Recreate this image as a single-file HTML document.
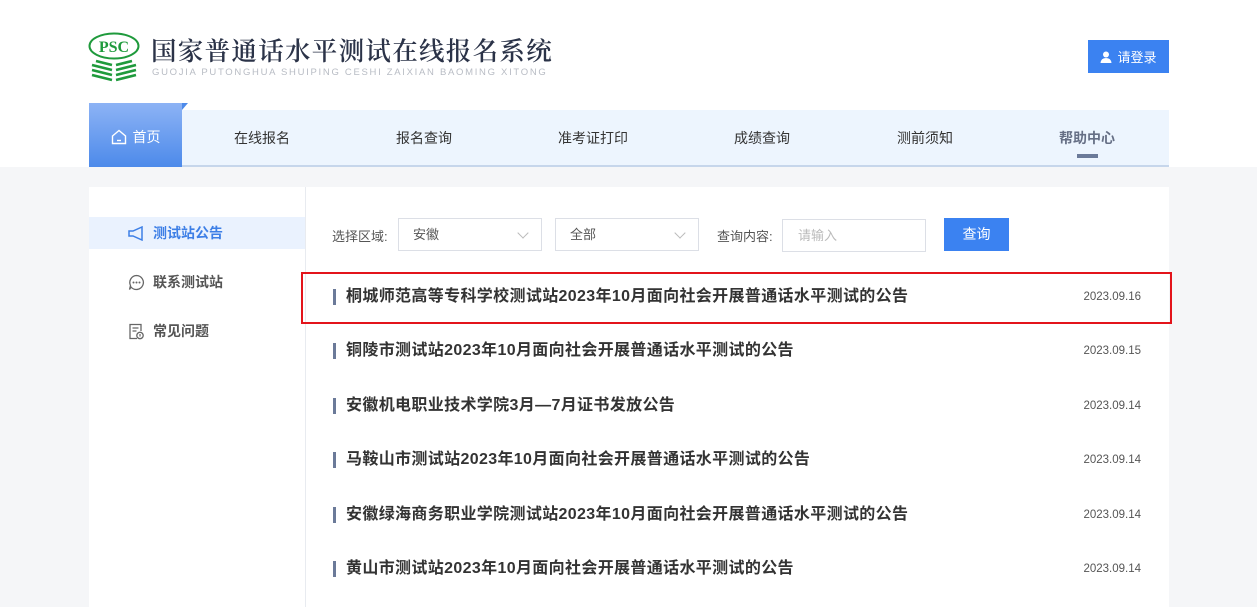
<!DOCTYPE html>
<html><head><meta charset="utf-8"><style>
*{margin:0;padding:0;box-sizing:border-box}
body{width:1257px;height:595px;overflow:hidden;background:#f5f6f8;font-family:"Liberation Sans","Noto Sans CJK SC",sans-serif;position:relative}
.hdr{position:absolute;left:0;top:0;width:1257px;height:167px;background:#fff}
.abs{position:absolute}
.title{left:151px;top:34px;font-size:25.5px;line-height:32px;color:#2b3348;letter-spacing:1.3px;font-family:"Noto Serif CJK SC","Noto Sans CJK SC",serif;font-weight:600;white-space:nowrap}
.sub{left:152px;top:67px;font-size:9.5px;color:#b8bcc4;letter-spacing:1.7px;white-space:nowrap}
.login{left:1088px;top:40px;width:81px;height:33px;background:#3b82f1;color:#fff;font-size:13px;display:flex;align-items:center;justify-content:center;gap:5px}
.nav{left:89px;top:110px;width:1080px;height:57px;background:#edf5fe;border-bottom:2px solid #c6d6eb}
.home{left:89px;top:103px;width:93px;height:64px;padding-top:4px;background:linear-gradient(#8db3f5,#4d8aea);color:#fff;font-size:14px;display:flex;align-items:center;justify-content:center;gap:6px}
.ni{top:128px;font-size:14px;color:#333;white-space:nowrap}
.card{left:89px;top:187px;width:1080px;height:420px;background:#fff}
.side{left:305px;top:187px;width:1px;height:420px;background:#e8ebf0}
.si{left:89px;width:216px;height:32px;display:flex;align-items:center;padding-left:39px;gap:8px;font-size:14px;font-weight:bold;color:#555}
.lbl{font-size:13px;color:#555;top:226px}
.sel{top:218px;height:33px;border:1px solid #dcdfe6;font-size:13px;color:#555;padding-left:14px;line-height:31px}
.sel:after{content:"";position:absolute;right:14px;top:10px;width:7px;height:7px;border-right:1px solid #bbb;border-bottom:1px solid #bbb;transform:rotate(45deg)}
.row{left:333px;width:808px;height:20px;display:flex;justify-content:space-between;align-items:center}
.row b{font-size:16px;letter-spacing:0.35px;color:#333;border-left:3px solid #6b7a99;padding-left:10px;line-height:16px}
.row span{font-size:11.5px;color:#555}
</style></head><body>
<div class="hdr"></div>
<svg class="abs" style="left:88px;top:32px" width="52" height="50" viewBox="0 0 52 50">
<ellipse cx="26" cy="14" rx="24.5" ry="12.5" fill="none" stroke="#1f9a3c" stroke-width="2"/>
<text x="26" y="20" text-anchor="middle" font-family="Liberation Serif" font-weight="bold" font-size="16" fill="#1f9a3c">PSC</text>
<g fill="none" stroke="#1f9a3c" stroke-width="2.6">
<path d="M4 33 L24 38 M28 38 L48 33"/><path d="M4 38 L24 43 M28 43 L48 38"/><path d="M4 43 L24 48 M28 48 L48 43"/><path d="M8 29 L24 33 M28 33 L44 29"/></g></svg>
<div class="abs title">国家普通话水平测试在线报名系统</div>
<div class="abs sub">GUOJIA PUTONGHUA SHUIPING CESHI ZAIXIAN BAOMING XITONG</div>
<div class="abs login"><svg width="12" height="12" viewBox="0 0 12 12"><circle cx="6" cy="3.5" r="3" fill="#fff"/><path d="M0.5 12 Q1 7 6 7 Q11 7 11.5 12Z" fill="#fff"/></svg>请登录</div>
<div class="abs nav"></div>
<div class="abs" style="left:182px;top:103px;width:0;height:0;border-left:6px solid #4d8aea;border-bottom:7px solid transparent"></div>
<div class="abs home"><svg width="16" height="16" viewBox="0 0 16 16"><path d="M1.5 7 L8 1.5 L14.5 7 V14.5 H1.5Z" fill="none" stroke="#fff" stroke-width="1.4"/><path d="M6 11.5 H10" stroke="#fff" stroke-width="1.4"/></svg>首页</div>
<div class="abs ni" style="left:234px">在线报名</div>
<div class="abs ni" style="left:396px">报名查询</div>
<div class="abs ni" style="left:558px">准考证打印</div>
<div class="abs ni" style="left:734px">成绩查询</div>
<div class="abs ni" style="left:897px">测前须知</div>
<div class="abs ni" style="left:1059px;font-weight:bold;color:#666f85">帮助中心</div>
<div class="abs" style="left:1077px;top:154px;width:21px;height:4px;background:#6b7a99"></div>
<div class="abs card"></div>
<div class="abs side"></div>
<div class="abs si" style="top:217px;background:#eaf2fe;color:#3d7fe6"><svg width="17" height="15" viewBox="0 0 17 15"><path d="M1 5 H5 L14 1 V14 L5 10 H1Z" fill="none" stroke="#3d7fe6" stroke-width="1.5"/></svg>测试站公告</div>
<div class="abs si" style="top:266px"><svg width="17" height="17" viewBox="0 0 17 17"><path d="M8.5 1.5 A7 7 0 1 1 3 13 L1.5 15.5 L2.5 11.5 A7 7 0 0 1 8.5 1.5Z" fill="none" stroke="#666" stroke-width="1.3"/><circle cx="5.5" cy="8.5" r="1" fill="#666"/><circle cx="8.5" cy="8.5" r="1" fill="#666"/><circle cx="11.5" cy="8.5" r="1" fill="#666"/></svg>联系测试站</div>
<div class="abs si" style="top:315px"><svg width="17" height="17" viewBox="0 0 17 17"><path d="M9 15.5 H2 V1.5 H13 V8" fill="none" stroke="#666" stroke-width="1.3"/><path d="M4.5 5 H10.5 M4.5 8 H8.5" stroke="#666" stroke-width="1.3"/><circle cx="12" cy="12.5" r="3.2" fill="none" stroke="#666" stroke-width="1.3"/><path d="M12 11 V13.5" stroke="#666" stroke-width="1.2"/></svg>常见问题</div>
<div class="abs lbl" style="left:332px">选择区域:</div>
<div class="abs sel" style="left:398px;width:144px">安徽</div>
<div class="abs sel" style="left:555px;width:144px">全部</div>
<div class="abs lbl" style="left:717px">查询内容:</div>
<div class="abs" style="left:782px;top:219px;width:144px;height:33px;border:1px solid #dcdfe6;font-size:13px;color:#bbb;padding-left:15px;line-height:31px">请输入</div>
<div class="abs" style="left:944px;top:218px;width:65px;height:33px;background:#3b82f1;color:#fff;font-size:14px;text-align:center;line-height:33px">查询</div>
<div class="abs" style="left:301px;top:272px;width:871px;height:52px;border:2px solid #e3141b"></div>
<div class="abs row" style="top:287px"><b>桐城师范高等专科学校测试站2023年10月面向社会开展普通话水平测试的公告</b><span>2023.09.16</span></div>
<div class="abs row" style="top:341px"><b>铜陵市测试站2023年10月面向社会开展普通话水平测试的公告</b><span>2023.09.15</span></div>
<div class="abs row" style="top:396px"><b>安徽机电职业技术学院3月—7月证书发放公告</b><span>2023.09.14</span></div>
<div class="abs row" style="top:450px"><b>马鞍山市测试站2023年10月面向社会开展普通话水平测试的公告</b><span>2023.09.14</span></div>
<div class="abs row" style="top:505px"><b>安徽绿海商务职业学院测试站2023年10月面向社会开展普通话水平测试的公告</b><span>2023.09.14</span></div>
<div class="abs row" style="top:559px"><b>黄山市测试站2023年10月面向社会开展普通话水平测试的公告</b><span>2023.09.14</span></div>
</body></html>
